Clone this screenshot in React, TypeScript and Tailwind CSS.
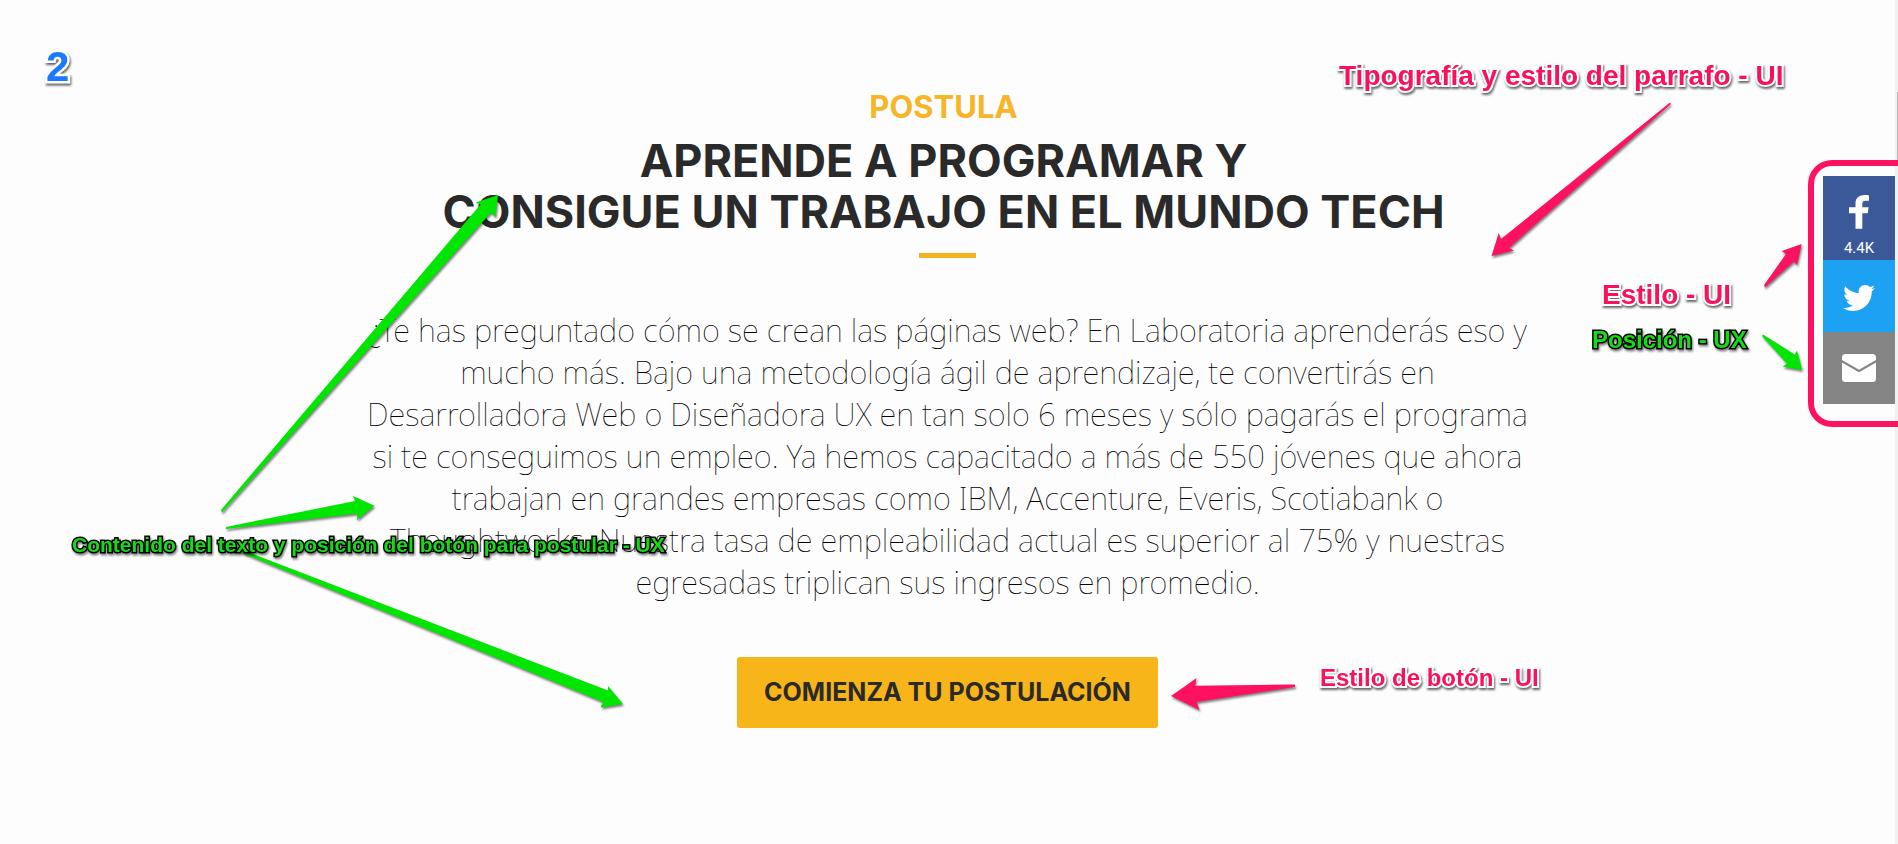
import React from "react";
import { FaTwitter } from "react-icons/fa";

const pinkArrows = [
  "M1670 102.5 L1501 239 L1498.7 233 L1491.5 256 L1514 250.6 L1509 248 L1671 104 Z",
  "M1764 285 L1786 254 L1781.7 251 L1801.7 244 L1797 265 L1794 261.5 L1765 287.5 Z",
  "M1295 684.5 L1195 685.7 L1196.6 678 L1171 696 L1199.5 710 L1196.6 702 L1295 687 Z",
];

const greenArrows = [
  "M221 510 L480.5 204.5 L475.7 202.5 L498 195 L495.5 217 L491 212.5 L222 512.5 Z",
  "M226 527 L355 501 L353 496 L374.5 505.7 L357 520 L357.5 513.5 L226 529 Z",
  "M240 549 L608 690.5 L608 686 L623 704 L600.6 707.6 L603 702 L240 552 Z",
  "M1763 334.5 L1794.7 354.5 L1797 350.6 L1802 370 L1782.7 366.7 L1787 363.5 L1762 336 Z",
];

type NoteProps = { className: string; children: React.ReactNode };

function Note({ className, children }: NoteProps) {
  return (
    <p
      className={`absolute whitespace-nowrap font-['Liberation_Sans',Arial,sans-serif] leading-none font-bold [paint-order:stroke_fill] ${className}`}
    >
      {children}
    </p>
  );
}

const pinkNote =
  "text-[#f9115c] [-webkit-text-stroke:4px_white] drop-shadow-[1px_2px_1px_rgba(0,0,0,0.6)]";
const greenNote =
  "text-[#14dc14] [-webkit-text-stroke:3px_black] drop-shadow-[1px_2px_1px_rgba(0,0,0,0.5)]";

function Annotations() {
  return (
    <div className="pointer-events-none absolute inset-0 overflow-hidden">
      <svg
        className="absolute top-0 left-0 drop-shadow-[1px_2px_1px_rgba(0,0,0,0.5)]"
        width="1898"
        height="844"
        viewBox="0 0 1898 844"
        aria-hidden="true"
      >
        {pinkArrows.map((d) => (
          <path key={d} d={d} fill="#fd1160" />
        ))}
        {greenArrows.map((d) => (
          <path key={d} d={d} fill="#00e600" />
        ))}
      </svg>
      <Note className="top-[46px] left-[46px] text-[42px] text-[#1a7aff] [-webkit-text-stroke:5px_white] drop-shadow-[1px_2px_1px_rgba(0,0,0,0.6)]">
        2
      </Note>
      <Note className={`top-[62px] left-[1339px] text-[28px] ${pinkNote}`}>
        Tipografía y estilo del parrafo - UI
      </Note>
      <Note className={`top-[281px] left-[1602px] text-[28px] ${pinkNote}`}>Estilo - UI</Note>
      <Note className={`top-[328px] left-[1592px] text-[24px] ${greenNote}`}>Posición - UX</Note>
      <Note className={`top-[534px] left-[72px] text-[21px] ${greenNote}`}>
        Contenido del texto y posición del botón para postular - UX
      </Note>
      <Note className={`top-[666px] left-[1320px] text-[24px] ${pinkNote}`}>
        Estilo de botón - UI
      </Note>
    </div>
  );
}

function SocialBar() {
  return (
    <aside className="absolute top-[160px] right-0 rounded-l-[24px] border-y-[6px] border-l-[6px] border-[#fd1160] pt-[10px] pr-[3px] pb-[17px] pl-[9px]">
      <a
        href="#facebook"
        aria-label="Facebook"
        className="flex h-[84px] w-[72px] flex-col items-center gap-3 bg-[#3b5998] pt-[19px] text-white"
      >
        <svg width="20" height="34" viewBox="0 0 20 34" fill="currentColor" aria-hidden="true">
          <path d="M13.3 33.8V18.3h5.4l.9-6h-6.3V9c0-2.200.9-3.200 3.200-3.200H20V.4C19 .2 17.500 0 15.800 0 10.200 0 6.500 3 6.500 8.400V12.300H0v6h6.500v15.500z" />
        </svg>
        <span className="font-[Roboto,sans-serif] text-[15px] leading-none">4.4K</span>
      </a>
      <a
        href="#twitter"
        aria-label="Twitter"
        className="flex h-[72px] w-[72px] items-center justify-center bg-[#1da1f2] pt-1 text-white"
      >
        <FaTwitter size={32} />
      </a>
      <a
        href="#correo"
        aria-label="Correo"
        className="flex h-[72px] w-[72px] items-center justify-center bg-[#848484] text-white"
      >
        <svg width="34" height="28" viewBox="0 0 34 28" fill="currentColor" aria-hidden="true">
          <path d="M3.500 0h27A3.500 3.500 0 0 1 34 3.500V6L17 15.800 0 6V3.500A3.500 3.500 0 0 1 3.500 0z" />
          <path d="M0 8.600l17 9.700 17-9.700v15.900a3.500 3.500 0 0 1-3.500 3.500h-27A3.500 3.500 0 0 1 0 24.500z" />
        </svg>
      </a>
    </aside>
  );
}

export default function App() {
  return (
    <div className="relative flex min-h-screen bg-[#fefdfe] font-[Inter,sans-serif] text-[#2a2a2a]">
      <main className="flex flex-1 flex-col items-center px-6 pt-[87px] pb-[116px] text-center">
        <h3 className="pr-2 text-[31px] leading-[40px] font-bold text-[#f7b528]">POSTULA</h3>
        <h2 className="mt-2 pr-2 text-[45px] leading-[51px] font-bold">
          APRENDE A PROGRAMAR Y<br />
          CONSIGUE UN TRABAJO EN EL MUNDO TECH
        </h2>
        <div className="mt-4 h-[5px] w-[57px] bg-[#f5b21f]" />
        <p className="mt-[51px] font-['Noto_Sans',sans-serif] text-[31px] leading-[42px] font-thin text-black">
          ¿Te has preguntado cómo se crean las páginas web? En Laboratoria aprenderás eso y
          <br />
          mucho más. Bajo una metodología ágil de aprendizaje, te convertirás en
          <br />
          Desarrolladora Web o Diseñadora UX en tan solo 6 meses y sólo pagarás el programa
          <br />
          si te conseguimos un empleo. Ya hemos capacitado a más de 550 jóvenes que ahora
          <br />
          trabajan en grandes empresas como IBM, Accenture, Everis, Scotiabank o
          <br />
          Thoughtworks. Nuestra tasa de empleabilidad actual es superior al 75% y nuestras
          <br />
          egresadas triplican sus ingresos en promedio.
        </p>
        <button
          type="button"
          className="mt-[54px] h-[71px] rounded-[3px] bg-[#f7b519] px-[27px] text-[25px] font-bold"
        >
          COMIENZA TU POSTULACIÓN
        </button>
      </main>
      <div className="flex w-[3px] justify-end bg-[#f1f1f1] pt-[92px]">
        <div className="h-[70px] w-px bg-[#b5b5b5]" />
      </div>
      <SocialBar />
      <Annotations />
    </div>
  );
}
